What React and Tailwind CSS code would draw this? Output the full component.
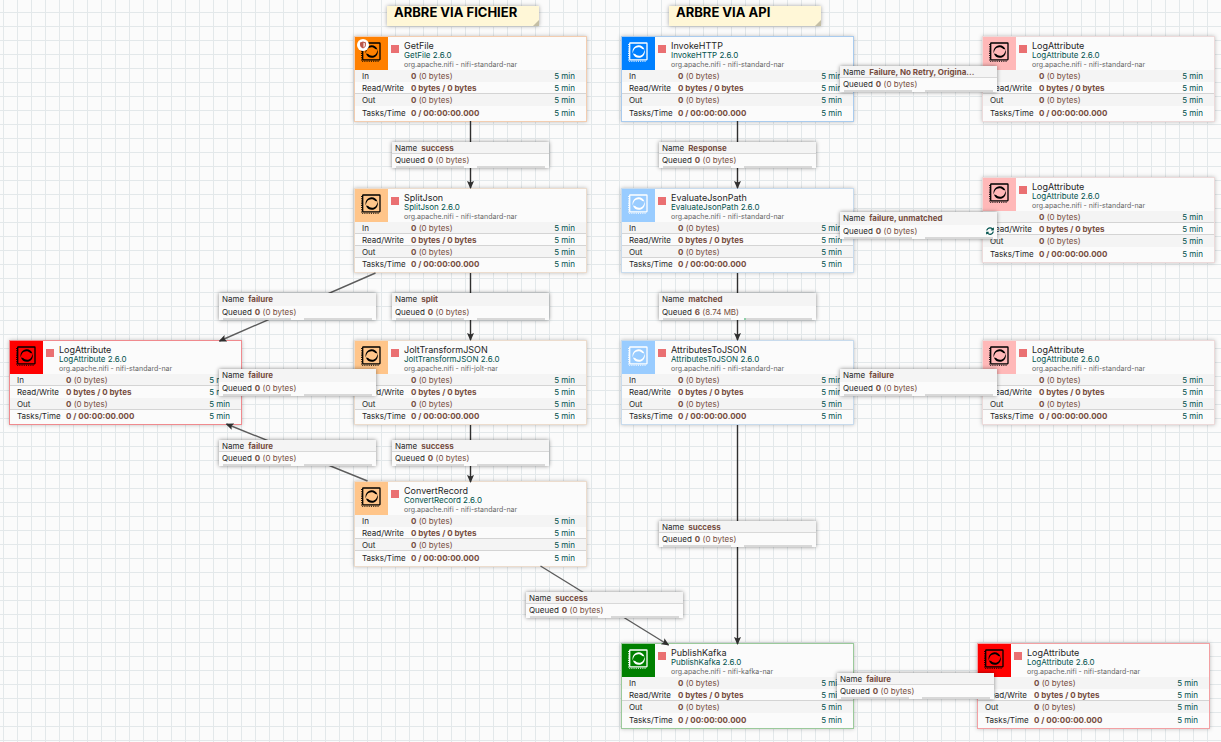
import { FaSyncAlt } from "react-icons/fa";

const stats = [
  ["In", "0", "(0 bytes)"],
  ["Read/Write", "0 bytes / 0 bytes", ""],
  ["Out", "0", "(0 bytes)"],
  ["Tasks/Time", "0 / 00:00:00.000", ""],
];

const tones = {
  orange: { tile: "bg-[#ff8000] text-black", edge: "border-[#f3cdb0]" },
  peach: { tile: "bg-[#ffc58a] text-black", edge: "border-[#ecdccd]" },
  blue: { tile: "bg-[#0080ff] text-white", edge: "border-[#a9cbee]" },
  sky: { tile: "bg-[#99ccff] text-white", edge: "border-[#c8dbed]" },
  pink: { tile: "bg-[#ffb8b8] text-black", edge: "border-[#ecdada]" },
  red: { tile: "bg-[#ff0000] text-black", edge: "border-[#f08a8e]" },
  rose: { tile: "bg-[#ff0000] text-black", edge: "border-[#f3a0a3]" },
  green: { tile: "bg-[#008000] text-white", edge: "border-[#9bca9b]" },
};

// rules: which of the first three statistic rows carry a line below them
const processors = [
  { name: "GetFile", x: 355, y: 37, tone: "orange", restricted: true, rules: [0, 1, 0] },
  { name: "InvokeHTTP", x: 622, y: 37, tone: "blue", rules: [0, 1, 0] },
  { name: "LogAttribute", x: 983, y: 37, tone: "pink", rules: [0, 1, 0] },
  { name: "SplitJson", x: 355, y: 189, tone: "peach", rules: [1, 1, 1] },
  { name: "EvaluateJsonPath", x: 622, y: 189, tone: "sky", rules: [1, 1, 1] },
  { name: "LogAttribute", x: 983, y: 178, tone: "pink", rules: [1, 1, 0] },
  { name: "LogAttribute", x: 10, y: 341, tone: "red", rules: [1, 0, 1] },
  { name: "JoltTransformJSON", x: 355, y: 341, tone: "peach", nar: "nifi-jolt-nar", rules: [1, 0, 1] },
  { name: "AttributesToJSON", x: 622, y: 341, tone: "sky", rules: [1, 0, 1] },
  { name: "LogAttribute", x: 983, y: 341, tone: "pink", rules: [1, 0, 1] },
  { name: "ConvertRecord", x: 355, y: 482, tone: "peach", rules: [0, 1, 1] },
  { name: "PublishKafka", x: 622, y: 644, tone: "green", nar: "nifi-kafka-nar", rules: [0, 1, 0] },
  { name: "LogAttribute", x: 978, y: 644, tone: "rose", rules: [0, 1, 0] },
];

const connections = [
  { name: "success", x: 392, y: 142, ruled: true },
  { name: "Response", x: 659, y: 142, ruled: true },
  { name: "Failure, No Retry, Origina...", x: 840, y: 66, ruled: true },
  { name: "failure, unmatched", x: 840, y: 212, retry: true },
  { name: "failure", x: 219, y: 293 },
  { name: "split", x: 392, y: 293 },
  { name: "matched", x: 659, y: 293, count: "6", size: "(8.74 MB)", filled: true },
  { name: "failure", x: 219, y: 369 },
  { name: "failure", x: 840, y: 369 },
  { name: "failure", x: 219, y: 440, ruled: true },
  { name: "success", x: 392, y: 440, ruled: true },
  { name: "success", x: 659, y: 521, ruled: true },
  { name: "success", x: 526, y: 592, ruled: true },
  { name: "failure", x: 837, y: 673, ruled: true },
];

const links = [
  [470, 121, 470, 188],
  [737, 121, 737, 188],
  [470, 273, 470, 340],
  [737, 273, 737, 340],
  [470, 425, 470, 482],
  [737, 425, 737, 644],
  [375, 273, 219, 341],
  [367, 481, 226, 424],
  [540, 566, 668, 645],
];

function ProcessorIcon() {
  return (
    <svg viewBox="0 0 20 20" className="size-5" fill="none" stroke="currentColor" aria-hidden="true">
      <rect x="1.700" y="1" width="17.300" height="16.800" rx="0.500" strokeWidth="1.300" />
      <path d="M0.700 2v17.200H18" strokeWidth="1.100" strokeDasharray="1.100 1.100" />
      <g fill="currentColor" stroke="none">
        <path d="M4.900 11.600C3.400 6.800 6.900 3.200 10.600 3.200c2.900 0 5 1.600 5.900 4.400l-2.300-.7C13.200 5.900 12 5.300 10.300 5.300c-3.200 0-5.200 2.800-5.400 6.300Z" />
        <path d="M16.500 7.400c1.500 4.800-2 8.400-5.700 8.400-2.900 0-5-1.600-5.900-4.400l2.300.7c1 1 2.200 1.600 3.900 1.600 3.200 0 5.200-2.800 5.400-6.300Z" />
      </g>
    </svg>
  );
}

function ShieldBadge() {
  return (
    <svg viewBox="0 0 12 12" className="absolute left-0.5 top-0.5 size-3" aria-hidden="true">
      <circle cx="6" cy="6" r="6" fill="#fff" />
      <path d="M6 2.600 9 3.400v2.400c0 1.700-1.200 3-3 3.800-1.800-.8-3-2.100-3-3.800V3.400Z" fill="#ba554a" />
      <path d="M6.400 3.700 8.100 4.200v1.700c0 1-.7 1.900-1.700 2.500Z" fill="#f3dcd8" />
    </svg>
  );
}

function Processor({ name, x, y, tone, nar = "nifi-standard-nar", restricted, rules }) {
  const { tile, edge } = tones[tone];
  const roomy = !(rules[0] && rules[2]);
  return (
    <article
      style={{ left: x - 1, top: y - 1 }}
      className={`absolute w-[233px] border bg-[#fbfbfb] shadow-[0_0_4px_rgba(0,0,0,0.25)] ${edge}`}
    >
      <header className="flex h-[33px]">
        <div className={`relative w-[33px] pl-[6px] pt-[5px] ${tile}`}>
          <ProcessorIcon />
          {restricted && <ShieldBadge />}
        </div>
        <span className="ml-[3px] mt-2 size-2 bg-[#ea7072]" />
        <div className="ml-[5px] pt-[3px]">
          <h2 className="text-[9px] leading-[11px] text-[#262626]">{name}</h2>
          <p className="text-[8px] leading-[9px] text-[#00524d]">{name} 2.6.0</p>
          <p className="text-[7px] leading-[9px] text-[#666]">org.apache.nifi - {nar}</p>
        </div>
      </header>
      <table className="w-full table-fixed border-collapse text-[8px] leading-3">
        <tbody>
          {stats.map(([label, value, detail], i) => (
            <tr
              key={label}
              className={`${roomy && i === 3 ? "h-[14px]" : "h-[12px]"} ${i % 2 ? "bg-[#fbfbfb]" : "bg-[#f4f4f4]"} ${rules[i] ? "shadow-[inset_0_-1px_0_#d4d4d4]" : ""}`}
            >
              <th scope="row" className="w-[56px] p-0 pl-[7px] text-left font-normal text-[#262626]">{label}</th>
              <td className="p-0 text-[#764d40]">
                <span className="font-bold">{value}</span> {detail}
              </td>
              <td className="w-[48px] p-0 pr-[11px] text-right text-[#00524d]">5 min</td>
            </tr>
          ))}
        </tbody>
      </table>
      <div className={roomy ? "h-px" : "h-[2px]"} />
    </article>
  );
}

function Connection({ name, x, y, count = "0", size = "(0 bytes)", ruled, retry, filled }) {
  return (
    <section
      style={{ left: x, top: y }}
      className="absolute w-[157px] bg-[#fbfbfb] text-[8px] leading-3 shadow-[0_0_4px_rgba(0,0,0,0.45)]"
    >
      <p
        className={`flex gap-1 bg-[#f4f4f4] px-[3px] text-[#764d40] ${ruled ? "h-3 shadow-[inset_0_-1px_0_#d8d8d8]" : "h-[13px]"}`}
      >
        <span className="text-[#262626]">Name</span>
        <span className="whitespace-nowrap font-bold">{name}</span>
      </p>
      <div className="flex items-center gap-[3px] px-[3px] text-[#764d40]">
        <span className="text-[#262626]">Queued</span>
        <span><span className="font-bold">{count}</span> {size}</span>
        {retry && <FaSyncAlt className="ml-auto size-2 text-[#00524d]" />}
      </div>
      <div className="flex justify-between px-1">
        <span className="h-[2px] w-[68px] bg-[#d8d8d8]" />
        <span className="h-[2px] w-[68px] bg-[#d8d8d8]">
          {filled && <span className="block h-[2px] w-[2px] bg-[#8fcfa8]" />}
        </span>
      </div>
    </section>
  );
}

function Note({ x, children }) {
  return (
    <div
      style={{ left: x }}
      className="absolute top-[6px] h-[20px] w-[152px] bg-[#fff7d7] pl-[7px] text-[13px] font-bold leading-3 text-black shadow-[0_0_4px_rgba(0,0,0,0.35)]"
    >
      {children}
      <svg viewBox="0 0 6 6" className="absolute bottom-0 right-0 size-[6px]" aria-hidden="true">
        <path d="M6 0v6H0Z" fill="#c4bea5" />
      </svg>
    </div>
  );
}

export default function App() {
  return (
    <main className="relative min-h-screen overflow-hidden bg-[#fbfbfb] bg-[linear-gradient(to_right,#e3e8ea_1px,transparent_1px),linear-gradient(to_bottom,#e3e8ea_1px,transparent_1px)] bg-[length:14px_14px] bg-[position:3px_12px] font-['Inter',sans-serif]">
      <Note x={387}>ARBRE VIA FICHIER</Note>
      <Note x={669}>ARBRE VIA API</Note>
      {processors.map((p) => (
        <Processor key={`${p.x}-${p.y}`} {...p} />
      ))}
      <svg className="absolute inset-0 size-full" aria-hidden="true">
        <defs>
          <marker id="arrow" viewBox="0 0 8 8" refX="7" refY="4" markerWidth="8" markerHeight="8" markerUnits="userSpaceOnUse" orient="auto">
            <path d="M0 0.500 8 4 0 7.500 1.600 4Z" fill="#2f2f2f" />
          </marker>
        </defs>
        {links.map(([x1, y1, x2, y2]) => (
          <line
            key={`${x1}-${y1}-${x2}`}
            x1={x1 + 0.5}
            y1={y1}
            x2={x2 + 0.5}
            y2={y2}
            stroke={x1 === x2 ? "#2f2f2f" : "#5c5c5c"}
            strokeWidth="1.400"
            markerEnd="url(#arrow)"
          />
        ))}
      </svg>
      {connections.map((c) => (
        <Connection key={`${c.x}-${c.y}`} {...c} />
      ))}
    </main>
  );
}
